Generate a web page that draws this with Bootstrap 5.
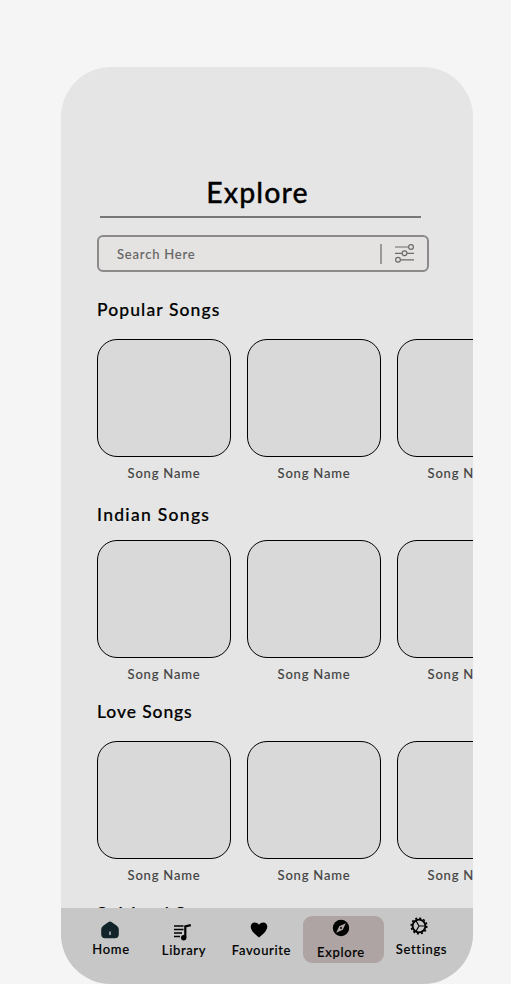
<!DOCTYPE html>
<html lang="en">
<head>
<meta charset="utf-8">
<meta name="viewport" content="width=device-width, initial-scale=1">
<title>Explore</title>
<link href="https://cdn.jsdelivr.net/npm/bootstrap@5.3.0/dist/css/bootstrap.min.css" rel="stylesheet">
<style>
body{background:#f5f5f5;font-family:Lato,"Open Sans",sans-serif;font-weight:500;color:#000;height:984px;overflow:hidden}
.phone{width:412px;height:917px;margin:67px 0 0 61px;background:#e5e5e5;border-radius:50px}
.screen{height:841px;padding-left:36px}
.title{width:321px;margin:105px 0 0 3px;height:46px;border-bottom:2px solid #777;padding-right:6px}
.title h1{font-size:28.5px;line-height:40px;font-weight:500;letter-spacing:1.1px;-webkit-text-stroke:.3px}
.search{width:332px;height:37px;margin-top:17px;border:2px solid #8b8989;border-radius:6px;background:#e4e3e1;padding:0 12px 0 18px;color:#666;font-size:13px;letter-spacing:.8px}
.search span:first-child{padding-top:2px;-webkit-text-stroke:.1px}
.divider{width:2px;height:20px;background:#999;margin-right:12px}
.shelf h2{font-size:17.5px;line-height:24px;font-weight:500;letter-spacing:1.1px;-webkit-text-stroke:.2px}
.s1{margin-top:26px}.s1 h2{margin-bottom:17px}
.s2{margin-top:20px}.s2 h2{margin-bottom:13px;letter-spacing:1.3px}
.s3{margin-top:16px}.s3 h2{margin-bottom:17px;letter-spacing:.9px}
.s4{margin-top:17px}
.songs{gap:16px}
.song{width:134px;color:#444;font-size:13px;letter-spacing:.8px;line-height:20px;-webkit-text-stroke:.1px}
.cover{height:118px;border:1px solid #000;border-radius:20px;background:#d9d9d9;margin-bottom:6px}
.tabs{height:76px;background:#c7c7c7;padding-left:17px}
.tab{font-size:13px;line-height:18px;letter-spacing:.65px;color:#000;text-decoration:none;-webkit-text-stroke:.15px}
.tab svg{margin-bottom:1px}
.t1{width:66px;padding-top:12px}.t1 svg{margin:0 2px 0 0}
.t2{width:80px;padding-top:14px}.t2 svg{margin:0 3px -1px 0}
.t3{width:75px;padding-top:12px}.t3 svg{margin-right:5px}
.t4{width:81px;height:47px;margin:8px 0 0 4px;padding:2px 5px 0 0;border-radius:9px;background:#aea4a3}.t4 svg{margin-bottom:5px}
.t5{width:75px;padding-top:8px}.t5 svg{margin:0 5px 4px 0}
</style>
</head>
<body>
<main class="phone overflow-hidden d-flex flex-column">
<div class="screen overflow-hidden d-flex flex-column flex-shrink-0">
<header class="title text-center flex-shrink-0"><h1 class="m-0">Explore</h1></header>
<div class="search d-flex align-items-center flex-shrink-0"><span class="flex-grow-1">Search Here</span><span class="divider"></span>
<svg width="21" height="20" viewBox="0 0 21 20" fill="none" stroke="#6c6c6c" stroke-width="1.2"><path d="M1 3h13M1 9.300h7m5 0h7M7 15.800h13"/><circle cx="17" cy="3" r="2.400"/><circle cx="10.500" cy="9.300" r="2.400"/><circle cx="4" cy="15.800" r="2.400"/></svg></div>
<section class="shelf s1"><h2>Popular Songs</h2><div class="songs d-flex text-center"><div class="song flex-shrink-0"><div class="cover"></div>Song Name</div><div class="song flex-shrink-0"><div class="cover"></div>Song Name</div><div class="song flex-shrink-0"><div class="cover"></div>Song Name</div></div></section>
<section class="shelf s2"><h2>Indian Songs</h2><div class="songs d-flex text-center"><div class="song flex-shrink-0"><div class="cover"></div>Song Name</div><div class="song flex-shrink-0"><div class="cover"></div>Song Name</div><div class="song flex-shrink-0"><div class="cover"></div>Song Name</div></div></section>
<section class="shelf s3"><h2>Love Songs</h2><div class="songs d-flex text-center"><div class="song flex-shrink-0"><div class="cover"></div>Song Name</div><div class="song flex-shrink-0"><div class="cover"></div>Song Name</div><div class="song flex-shrink-0"><div class="cover"></div>Song Name</div></div></section>
<section class="shelf s4 flex-shrink-0"><h2>Spiritual Songs</h2></section>
</div>
<nav class="tabs d-flex align-items-start">
<a class="tab t1 d-flex flex-column align-items-center" href="#"><svg width="20" height="20" viewBox="0 0 20 20"><path d="M10 1.500q.8 0 1.800.7l5 3.500q2 1.500 2 3.500v5q0 4-4 4H5.200q-4 0-4-4v-5q0-2 2-3.500l5-3.500q1-.7 1.800-.7Z" fill="#10242a"/><path d="M10 11.500v3.500" stroke="#c7c7c7" stroke-width="1.400"/></svg>Home</a>
<a class="tab t2 d-flex flex-column align-items-center" href="#"><svg width="20" height="20" viewBox="0 0 20 20" fill="none" stroke="#000"><path d="M1 4h9.500M1 7.500h9.500M1 11h8M1 14.500h6" stroke-width="1.600"/><path d="M12.300 15.500V4.400l5.500-1.300" stroke-width="2.200"/><circle cx="10.700" cy="15.700" r="2.700" fill="#000" stroke="none"/></svg>Library</a>
<a class="tab t3 d-flex flex-column align-items-center" href="#"><svg width="20" height="20" viewBox="0 0 20 20"><path d="M10 17.500Q1.500 11 1.700 6.500C2 1.500 7.500 1.300 10 4.700C12.500 1.300 18 1.500 18.300 6.500Q18.500 11 10 17.500Z"/></svg>Favourite</a>
<a class="tab t4 d-flex flex-column align-items-center" href="#"><svg width="20" height="20" viewBox="0 0 20 20"><circle cx="10" cy="10" r="8.200"/><path d="M14.800 5.200l-3 6.600-6.600 3 3-6.600Z" fill="#aea4a3"/><circle cx="10" cy="10" r="1"/></svg>Explore</a>
<a class="tab t5 d-flex flex-column align-items-center" href="#"><svg width="20" height="20" viewBox="0 0 20 20" fill="none" stroke="#000"><circle cx="10" cy="10" r="6.400" stroke-width="1.900"/><circle cx="10" cy="10" r="7.800" stroke-width="1.600" stroke-dasharray="2.042 2.042"/><path d="M10 10h6M10 10L7 4.800M10 10l-3 5.200" stroke-width="1.200"/></svg>Settings</a>
</nav>
</main>
<script src="https://cdn.jsdelivr.net/npm/bootstrap@5.3.0/dist/js/bootstrap.bundle.min.js"></script>
</body>
</html>
